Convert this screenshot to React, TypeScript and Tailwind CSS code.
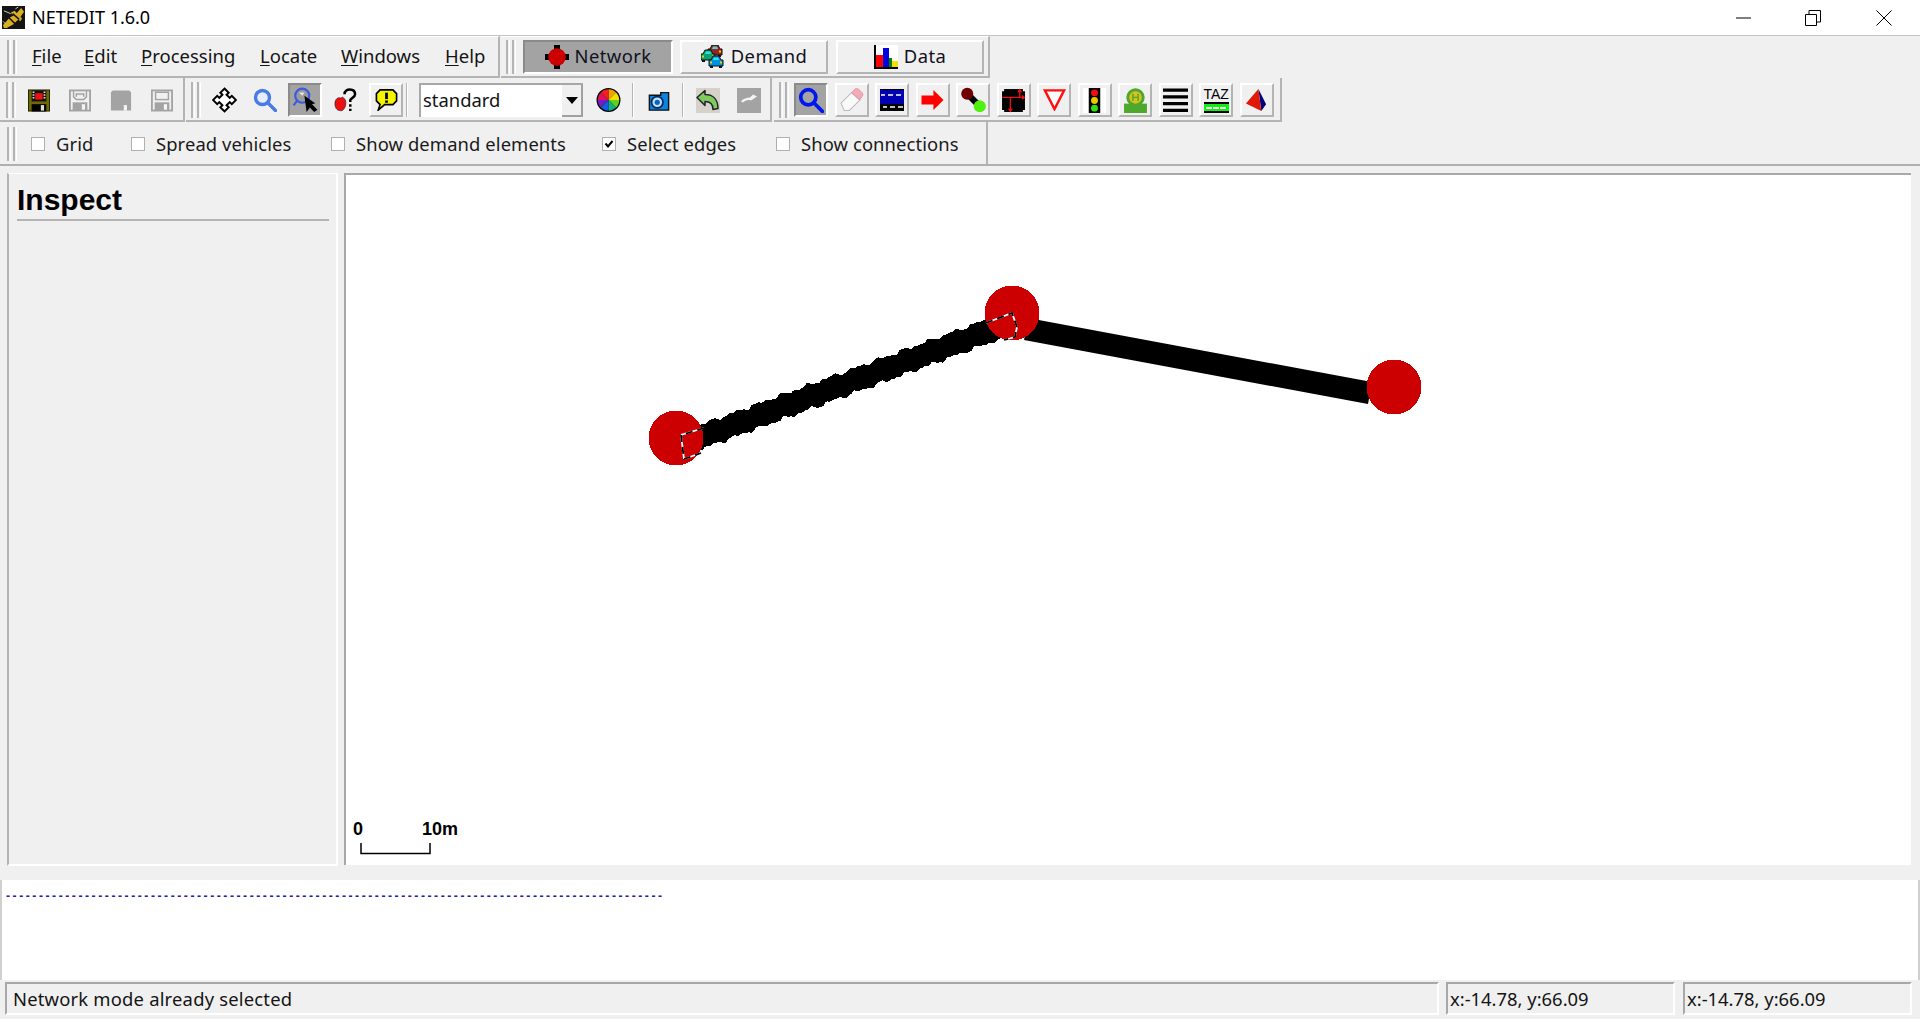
import React from 'react';

const uiFont = 'font-["Noto_Sans",sans-serif]';

// Icons are redrawn by hand from the toolbar bitmaps
const Svg = ({ className, children }: { className: string; children: React.ReactNode }) => (
  <svg viewBox="0 0 24 24" className={`block shrink-0 ${className}`}>{children}</svg>
);

const Logo = () => (
  <svg viewBox="0 0 24 24" className="block shrink-0 w-[23px] h-[23px] ml-[2px] mt-[-1px]">
    <rect width="24" height="24" fill="#141414" />
    <path d="M1 20 L8 12 L14 9 L20 2 L23 6 L18 13 L12 19 L5 23 L2 23 Z" fill="#d8b020" />
    <path d="M9 7 L19 16 L21 13 L13 5 Z" fill="#d8b020" />
    <path d="M6 11 L15 20 M11 8 L18 14" stroke="#141414" strokeWidth="1.6" />
    <path d="M2 5 L9 8 M14 3 L17 1 M1 16 L4 19" stroke="#d0d0d0" strokeWidth="1" />
  </svg>
);

const Disk = ({ variant }: { variant: number }) => {
  if (variant === 0) {
    return (
      <Svg className="w-[22px] h-[23px]">
        <rect x="0.5" y="0.5" width="23" height="23" fill="#6e6a00" stroke="#1a1a00" />
        <rect x="4" y="1" width="16" height="12" fill="#111" />
        <rect x="8" y="4" width="8" height="7" fill="#f01010" />
        <path d="M5 3h2M5 6h2M5 9h2M17 3h2M17 6h2M17 9h2" stroke="#ddd" strokeWidth="1.4" />
        <rect x="4" y="16" width="16" height="8" fill="#000" />
        <rect x="14" y="17" width="3.5" height="6" fill="#ddd" />
      </Svg>
    );
  }
  if (variant === 2) {
    return (
      <Svg className="w-[22px] h-[23px]">
        <path d="M1 3 L3 1 H21 L23 3 V23 H1 Z" fill="#a3a3a3" />
        <rect x="15" y="17" width="3.5" height="6" fill="#f4f4f4" />
      </Svg>
    );
  }
  return (
    <Svg className="w-[22px] h-[23px]">
      <rect x="1" y="1" width="22" height="22" fill="#f0f0f0" stroke="#a3a3a3" strokeWidth="2" />
      {variant === 1 ? (
        <path d="M5 2 V8 L8 11 H16 L19 8 V2 M8 8 V5 H16 V8" fill="none" stroke="#a3a3a3" strokeWidth="1.6" />
      ) : (
        <rect x="5" y="3" width="14" height="8" fill="#f0f0f0" stroke="#a3a3a3" strokeWidth="1.6" />
      )}
      <rect x="4" y="14" width="16" height="9" fill="#a3a3a3" />
      <rect x="14" y="16" width="3.5" height="6" fill="#f4f4f4" />
    </Svg>
  );
};

const MoveIcon = () => (
  <Svg className="w-[25px] h-[26px]">
    <path
      d="M12 1 L16 5 L14 7 L17 10 L19 8 L23 12 L19 16 L17 14 L14 17 L16 19 L12 23 L8 19 L10 17 L7 14 L5 16 L1 12 L5 8 L7 10 L10 7 L8 5 Z"
      fill="#fff"
      stroke="#000"
      strokeWidth="1.9"
    />
  </Svg>
);

const Glass = ({ stroke, fill, width = 3 }: { stroke: string; fill: string; width?: number }) => (
  <>
    <circle cx="9.5" cy="9.5" r="7" fill={fill} stroke={stroke} strokeWidth={width} />
    <path d="M15 15 L22.5 22.5" stroke={stroke} strokeWidth={width} strokeLinecap="round" />
  </>
);

const HelpIcon = () => (
  <Svg className="w-[23px] h-[24px]">
    <path d="M1 16 C1 11 4 9 7 10 L9 9 C12 11 13 13 12 18 C11 22 8 24 6 23 C3 23 1 20 1 16 Z" fill="#ee1010" stroke="#222" strokeWidth="0.7" />
    <path d="M11 6 C11 2 14 1 16.5 1 C20 1 22 3 22 6 C22 9 18 10 17 12 V14" fill="none" stroke="#000" strokeWidth="2.6" />
    <path d="M17 16.5 V19 M17 21 V23.5" stroke="#000" strokeWidth="2.6" />
  </Svg>
);

const BubbleIcon = () => (
  <Svg className="w-[23px] h-[22px]">
    <path d="M5 1 H19 L23 5 V13 L19 17 H10 L3 23 L5 17 L1 13 V5 Z" fill="#f4f400" stroke="#000" strokeWidth="1.8" />
    <path d="M12 4 V11" stroke="#000" strokeWidth="3" />
    <rect x="10.5" y="12.5" width="3" height="2.5" fill="#000" />
  </Svg>
);

const wheelColors = ['#f0a000', '#f4e000', '#60d020', '#10b080', '#1060e0', '#7020c0', '#e01060', '#f02020'];
const ColorWheel = () => (
  <Svg className="w-[25px] h-[26px]">
    <circle cx="12" cy="12" r="11.5" fill="#000" />
    {wheelColors.map((c, i) => {
      const a0 = (i * Math.PI) / 4 - Math.PI / 2;
      const a1 = a0 + Math.PI / 4;
      return (
        <path
          key={c}
          d={`M12 12 L${12 + 10.3 * Math.cos(a0)} ${12 + 10.3 * Math.sin(a0)} A10.3 10.3 0 0 1 ${12 + 10.3 * Math.cos(a1)} ${12 + 10.3 * Math.sin(a1)} Z`}
          fill={c}
        />
      );
    })}
  </Svg>
);

const CameraIcon = () => (
  <Svg className="w-[24px] h-[21px]">
    <path d="M1 6 H14 V3 H23 V23 H1 Z" fill="#0a84e0" stroke="#111" strokeWidth="1.6" />
    <circle cx="10" cy="14" r="6.5" fill="#b8e4ff" stroke="#062a60" strokeWidth="2" />
    <circle cx="10" cy="14" r="3" fill="#1060c0" />
  </Svg>
);

const UndoIcon = () => (
  <div className="w-[24px] h-[25px] bg-[#d6d2ca]">
    <Svg className="w-[24px] h-[25px]">
      <path d="M1 9 L9 2 V6 C16 6 22 10 22 20 L17 21 C17 16 14 13 9 13 V17 Z" fill="#7fcc5a" stroke="#223" strokeWidth="1.5" strokeLinejoin="round" />
    </Svg>
  </div>
);

const RedoIcon = () => (
  <div className="w-[24px] h-[25px] bg-[#a3a3a3]">
    <Svg className="w-[24px] h-[25px]">
      <path d="M4 13 C6 10 10 9 13 9 L16 6 L20 8 L14 12 C11 11 8 12 6 14 Z" fill="#f4f4f4" />
    </Svg>
  </div>
);

const LookupCursor = () => (
  <Svg className="w-[27px] h-[26px]">
    <circle cx="9" cy="8" r="6.5" fill="#9a9a9a" stroke="#3a5ae0" strokeWidth="2" />
    <path d="M9 8 L11 5 L6 5 Z" fill="#e8e8e8" />
    <path d="M4 13 L1 17" stroke="#3a5ae0" strokeWidth="2" />
    <path d="M11 8 L21 15 L18 16 L23 21 L20 23 L16 19 L13 23 Z" fill="#000" />
  </Svg>
);

const EraserIcon = () => (
  <Svg className="w-[25px] h-[26px]">
    <path d="M2 15 L12 5 L20 12 L10 22 L5 22 Z" fill="#fafafa" stroke="#bbb" strokeWidth="1" />
    <path d="M12 5 L16 1 C18 0 23 5 23 7 L20 12 Z" fill="#f4aab8" stroke="#e090a0" strokeWidth="0.8" />
  </Svg>
);

const LaneIcon = () => (
  <Svg className="w-[24px] h-[26px]">
    <rect x="0" y="1" width="24" height="22" fill="#000" />
    <rect x="0" y="2" width="24" height="14" fill="#0000b0" />
    <path d="M1 7 H5 M8 7 H13 M16 7 H21 M3 19 H7 M10 19 H15 M18 19 H23" stroke="#fff" strokeWidth="1.4" />
  </Svg>
);

const RedArrow = () => (
  <Svg className="w-[25px] h-[22px]">
    <path d="M0 7 H13 V1 L24 12 L13 23 V17 H0 Z" fill="#ff0000" />
  </Svg>
);

const ConnectionIcon = () => (
  <Svg className="w-[25px] h-[26px]">
    <path d="M7 7 L17 17" stroke="#000" strokeWidth="6" />
    <circle cx="6" cy="6" r="5.8" fill="#700000" />
    <circle cx="18" cy="18" r="5.8" fill="#50f010" />
  </Svg>
);

const CrossingIcon = () => (
  <Svg className="w-[25px] h-[25px]">
    <rect x="1" y="1" width="22" height="22" fill="#000" />
    <path d="M0 0h3v3h-3zM21 0h3v3h-3zM0 21h3v3h-3zM21 21h3v3h-3z" fill="#f0f0f0" />
    <path d="M1 9 H21 M9 9 V21 M18 3 V9" stroke="#ee1010" strokeWidth="1.3" />
    <path d="M18 0.5 L15.5 4 H20.5 Z M23.5 9 L20 6.5 V11.5 Z M9 23.5 L6.5 20 H11.5 Z" fill="#ee1010" />
  </Svg>
);

const YieldIcon = () => (
  <Svg className="w-[25px] h-[22px]">
    <path d="M1.5 1.5 H22.5 L12 22 Z" fill="#fff" stroke="#ff1010" strokeWidth="2.6" />
  </Svg>
);

const TrafficIcon = () => (
  <svg viewBox="0 0 24 26" className="block shrink-0 w-[23px] h-[25px] bg-white">
    <rect x="6" y="0" width="12" height="26" fill="#000" />
    <circle cx="12" cy="5" r="3.6" fill="#f01010" />
    <circle cx="12" cy="13" r="3.6" fill="#e8c800" />
    <circle cx="12" cy="21" r="3.6" fill="#30e010" />
  </svg>
);

const BusStopIcon = () => (
  <Svg className="w-[25px] h-[25px]">
    <rect x="1" y="15" width="22" height="9" fill="#4ea82c" />
    <circle cx="12" cy="9" r="8.8" fill="#4ea82c" />
    <circle cx="12" cy="9" r="6" fill="#d8c020" />
    <path d="M9.5 5.5 V12.5 M14.5 5.5 V12.5 M9.5 9 H14.5" stroke="#4ea82c" strokeWidth="1.4" />
  </Svg>
);

const StripesIcon = () => (
  <Svg className="w-[25px] h-[25px]">
    <path d="M0 2 H24 M0 8.5 H24 M0 15 H24 M0 21.5 H24" stroke="#000" strokeWidth="3" />
  </Svg>
);

const TazIcon = () => (
  <div className="flex flex-col items-center w-[25px] h-[26px]">
    <span className='block h-[14px] font-["Liberation_Sans",sans-serif] text-[15.5px] leading-[14px] text-black scale-x-90'>TAZ</span>
    <div className="w-[25px] h-[12px] mt-[1px] bg-[#10f010] border-y-2 border-black flex items-center justify-center">
      <div className="w-[20px] border-t-2 border-dashed border-white" />
    </div>
  </div>
);

const PolygonIcon = () => (
  <Svg className="w-[23px] h-[25px]">
    <path d="M14 0 L22 16 L17 23 Z" fill="#000080" />
    <path d="M14 0 L1 15 L17 23 Z" fill="#e01808" />
  </Svg>
);

const NetworkIcon = () => (
  <Svg className="w-[24px] h-[24px]">
    <path d="M9 0h6v5h-6zM0 9h5v6h-5zM19 9h5v6h-5zM9 19h6v5h-6z" fill="#000" />
    <circle cx="12" cy="12" r="8.8" fill="#cc0000" />
  </Svg>
);

const Car = ({ x, y, fill }: { x: number; y: number; fill: string }) => (
  <g transform={`translate(${x} ${y})`}>
    <path d="M2 4 L4 0 H10 L12 4 H14 V10 H0 V4 Z" fill={fill} stroke="#111" strokeWidth="1" />
    <path d="M4 4 L5 1.5 H9 L10 4 Z" fill="#30e0e0" />
    <rect x="1" y="5.5" width="2" height="2" fill="#f0d000" />
    <rect x="11" y="5.5" width="2" height="2" fill="#f0d000" />
    <rect x="1" y="10" width="3" height="2" fill="#111" />
    <rect x="10" y="10" width="3" height="2" fill="#111" />
  </g>
);

const DemandIcon = () => (
  <Svg className="w-[24px] h-[24px]">
    <Car x={7} y={0} fill="#a02020" />
    <Car x={0} y={5} fill="#10a070" />
    <Car x={8} y={11} fill="#0090e0" />
  </Svg>
);

const DataIcon = () => (
  <Svg className="w-[24px] h-[24px]">
    <rect width="24" height="24" fill="#fff" />
    <rect x="2" y="10" width="7" height="12" fill="#ff0000" />
    <rect x="9" y="3" width="6" height="19" fill="#0000e0" />
    <rect x="15" y="13" width="3" height="9" fill="#008000" />
    <rect x="18" y="16" width="6" height="6" fill="#f4e000" />
    <path d="M1 0 V23 H24" fill="none" stroke="#000" strokeWidth="2" />
  </Svg>
);

// double line handle at the start of every toolbar
const Grip = ({ className }: { className: string }) => (
  <div className={`flex gap-[2px] shrink-0 ${className}`}>
    <div className="w-[4px] h-full border-l-2 border-r border-l-[#b4b4b4] border-r-white" />
    <div className="w-[4px] h-full border-l-2 border-r border-l-[#b4b4b4] border-r-white" />
  </div>
);

const Divider = ({ className = '' }: { className?: string }) => (
  <div className={`w-[2px] h-[34px] shrink-0 border-l border-r border-l-[#b4b4b4] border-r-white ${className}`} />
);

const IconButton = ({ pressed, raised, children }: { pressed?: boolean; raised?: boolean; children: React.ReactNode }) => {
  let style = 'border-transparent';
  if (pressed) style = 'bg-[#a3a3a3] border-t-[#8a8a8a] border-l-[#8a8a8a] border-r-white border-b-white';
  if (raised) style = 'border-t-white border-l-white border-r-[#b4b4b4] border-b-[#b4b4b4]';
  return (
    <div className={`w-[34px] h-[34px] shrink-0 flex items-center justify-center border-2 ${style}`}>{children}</div>
  );
};

const ModeButton = ({ label, pressed, className, icon }: { label: string; pressed?: boolean; className: string; icon: React.ReactNode }) => (
  <div
    className={`flex items-center justify-center gap-[6px] h-[34px] border-2 text-[18.4px] tracking-[0.4px] text-[#111122] ${className} ${
      pressed
        ? 'bg-[#a3a3a3] border-t-[#8a8a8a] border-l-[#8a8a8a] border-r-white border-b-white'
        : 'border-t-white border-l-white border-r-[#b4b4b4] border-b-[#b4b4b4]'
    }`}
  >
    {icon}
    <span className="mt-[-2px]">{label}</span>
  </div>
);

const menus = [
  { label: 'File', key: 'F', rest: 'ile', width: 'w-[52px]' },
  { label: 'Edit', key: 'E', rest: 'dit', width: 'w-[57px]' },
  { label: 'Processing', key: 'P', rest: 'rocessing', width: 'w-[119px]' },
  { label: 'Locate', key: 'L', rest: 'ocate', width: 'w-[81px]' },
  { label: 'Windows', key: 'W', rest: 'indows', width: 'w-[104px]' },
  { label: 'Help', key: 'H', rest: 'elp', width: 'w-[50px]' },
];

const checks = [
  { label: 'Grid', width: 'w-[100px]', checked: false },
  { label: 'Spread vehicles', width: 'w-[200px]', checked: false },
  { label: 'Show demand elements', width: 'w-[271px]', checked: false },
  { label: 'Select edges', width: 'w-[174px]', checked: true },
  { label: 'Show connections', width: 'w-[190px]', checked: false },
];

const Check = ({ label, checked, width }: { label: string; checked: boolean; width: string }) => (
  <div className={`flex items-center shrink-0 text-[18.4px] tracking-[0.1px] text-[#1a1a1a] ${width}`}>
    <div className="w-[14px] h-[14px] mr-[11px] bg-white border border-[#b0b0b0] flex items-center justify-center">
      {checked && (
        <svg viewBox="0 0 10 10" className="block w-[10px] h-[10px]">
          <path d="M1.5 4.5 L4 7.5 L8.5 2" fill="none" stroke="#000" strokeWidth="2" />
        </svg>
      )}
    </div>
    <span>{label}</span>
  </div>
);

// the road in the picture has stepped edges, so it is built from small jogs
const jaggedRoad = (x0: number, y0: number, x1: number, y1: number, half: number): string => {
  const len = Math.hypot(x1 - x0, y1 - y0);
  const ux = (x1 - x0) / len;
  const uy = (y1 - y0) / len;
  const side = (sign: number, phase: number): string[] => {
    const pts: string[] = [];
    for (let d = 0; d <= len; d += 2) {
      const wob = 1.2 * Math.sin(d / 4.1 + phase) + 0.9 * Math.sin(d / 2.3 + phase) + 0.6 * Math.sin(d / 1.2);
      const h = half + wob;
      pts.push(`${(x0 + ux * d - sign * uy * h).toFixed(1)},${(y0 + uy * d + sign * ux * h).toFixed(1)}`);
    }
    return pts;
  };
  return [...side(1, 0), ...side(-1, 1.5).reverse()].join(' ');
};

const NetCanvas = () => (
  <svg viewBox="346 175 1565 690" className="block w-[1565px] h-[690px]">
    <polygon points={jaggedRoad(690, 441, 1005, 325, 11.5)} fill="#000" shapeRendering="crispEdges" />
    <polygon points="1028,318 1372,382 1368,404 1024,340" fill="#000" />
    <circle cx="676" cy="438" r="27.5" fill="#cc0000" shapeRendering="crispEdges" />
    <circle cx="1012" cy="313" r="27.5" fill="#cc0000" shapeRendering="crispEdges" />
    <circle cx="1394" cy="387" r="27.5" fill="#cc0000" shapeRendering="crispEdges" />
    <polyline points="704,428 681,435 684,459 701,453" fill="none" stroke="#fff" strokeWidth="1.8" />
    <polyline points="704,428 681,435 684,459 701,453" fill="none" stroke="#000" strokeWidth="1.8" strokeDasharray="7 5" />
    <polyline points="986,323 1012,313 1017,327 1015,337 1004,340" fill="none" stroke="#fff" strokeWidth="1.8" />
    <polyline points="986,323 1012,313 1017,327 1015,337 1004,340" fill="none" stroke="#000" strokeWidth="1.8" strokeDasharray="7 5" />
    <text x="353" y="835" fontFamily="Liberation Sans, sans-serif" fontWeight="700" fontSize="18" fill="#000">0</text>
    <text x="422" y="835" fontFamily="Liberation Sans, sans-serif" fontWeight="700" fontSize="18" fill="#000">10m</text>
    <path d="M361 843 V853.5 H430 V843" fill="none" stroke="#000" strokeWidth="1.5" />
  </svg>
);

const StatusBox = ({ text, className }: { text: string; className: string }) => (
  <div className={`h-[33px] flex items-center text-[18.4px] text-[#141414] border-t-2 border-l-2 border-r-2 border-b-2 border-t-[#a8a8a8] border-l-[#a8a8a8] border-r-white border-b-white ${className}`}>
    {text}
  </div>
);

export default function App(): React.ReactElement {
  return (
    <div className={`w-[1920px] h-[1019px] overflow-hidden bg-[#f0f0f0] flex flex-col ${uiFont}`}>
      {/* title bar */}
      <div className="h-[36px] shrink-0 bg-white border-b border-[#c4c4c4] flex items-center">
        <Logo />
        <span className="ml-[7px] text-[18px] text-black">NETEDIT 1.6.0</span>
        <div className="ml-auto flex items-center mr-[28px]">
          <svg viewBox="0 0 16 16" className="block w-[16px] h-[16px]">
            <path d="M0 8 H15" stroke="#000" strokeWidth="1" />
          </svg>
          <svg viewBox="0 0 16 16" className="block w-[16px] h-[16px] ml-[53px]">
            <path d="M0.5 4.5 H11.5 V15.5 H0.5 Z M4 4 V0.5 H15.5 V12 H12" fill="none" stroke="#000" strokeWidth="1" />
          </svg>
          <svg viewBox="0 0 16 16" className="block w-[16px] h-[16px] ml-[55px]">
            <path d="M0.5 0.5 L15.5 15.5 M15.5 0.5 L0.5 15.5" stroke="#000" strokeWidth="1" />
          </svg>
        </div>
      </div>

      {/* menu and supermode row */}
      <div className="h-[42px] shrink-0 flex">
        <div className="w-[500px] flex items-center border-t border-r-2 border-b-2 border-t-white border-r-[#b4b4b4] border-b-[#b4b4b4]">
          <Grip className="h-[34px] ml-[7px] mr-[15px]" />
          <div className="flex items-center mt-[-2px] text-[18.5px] text-[#141414]">
            {menus.map((m) => (
              <div key={m.label} className={m.width}>
                <span className="underline underline-offset-2">{m.key}</span>
                {m.rest}
              </div>
            ))}
          </div>
        </div>
        <div className="w-[489px] ml-[1px] flex items-center border-t border-r-2 border-b-2 border-t-white border-r-[#b4b4b4] border-b-[#b4b4b4]">
          <Grip className="h-[34px] ml-[5px] mr-[7px]" />
          <ModeButton label="Network" pressed className="w-[150px]" icon={<NetworkIcon />} />
          <ModeButton label="Demand" className="w-[148px] ml-[7px]" icon={<DemandIcon />} />
          <ModeButton label="Data" className="w-[148px] ml-[8px]" icon={<DataIcon />} />
        </div>
      </div>

      {/* tool row */}
      <div className="h-[44px] shrink-0 flex">
        <div className="w-[185px] flex items-center pt-[2px] border-r-2 border-b-2 border-r-[#b4b4b4] border-b-[#b4b4b4]">
          <Grip className="h-[36px] ml-[6px] mr-[12px]" />
          <div className="flex items-center gap-[19px]">
            <Disk variant={0} />
            <Disk variant={1} />
            <Disk variant={2} />
            <Disk variant={3} />
          </div>
        </div>
        <div className="w-[586px] ml-[1px] flex items-center pt-[2px] border-r-2 border-b-2 border-r-[#b4b4b4] border-b-[#b4b4b4]">
          <Grip className="h-[36px] ml-[5px] mr-[6px]" />
          <div className="flex items-center gap-[6.5px]">
            <IconButton><MoveIcon /></IconButton>
            <IconButton>
              <Svg className="w-[24px] h-[24px]"><Glass stroke="#4a7ae8" fill="#e4eefa" width={3.4} /></Svg>
            </IconButton>
            <IconButton pressed><LookupCursor /></IconButton>
            <IconButton><HelpIcon /></IconButton>
            <IconButton raised><BubbleIcon /></IconButton>
          </div>
          <Divider className="ml-[3px]" />
          <div className="ml-[11px] w-[164px] h-[34px] bg-white flex items-center border-t-2 border-l-2 border-t-[#a8a8a8] border-l-[#a8a8a8]">
            <span className="flex-1 pl-[2px] mt-[-2px] text-[18.4px] text-[#141414]">standard</span>
            <div className="w-[21px] h-[32px] bg-[#f0f0f0] border-r-2 border-b-2 border-r-[#a0a0a0] border-b-[#a0a0a0] flex items-center justify-center">
              <svg viewBox="0 0 12 7" className="block w-[12px] h-[7px]">
                <path d="M0 0 H12 L6 7 Z" fill="#000" />
              </svg>
            </div>
          </div>
          <div className="ml-[13px]"><ColorWheel /></div>
          <Divider className="ml-[11px]" />
          <div className="ml-[13px]"><CameraIcon /></div>
          <Divider className="ml-[11px]" />
          <div className="ml-[12px]"><UndoIcon /></div>
          <div className="ml-[17px]"><RedoIcon /></div>
        </div>
        <div className="w-[508px] ml-[2px] flex items-center pt-[2px] border-r-2 border-b-2 border-r-[#b4b4b4] border-b-[#b4b4b4]">
          <Grip className="h-[36px] ml-[5px] mr-[5px]" />
          <div className="flex items-center gap-[6.5px]">
            <IconButton pressed>
              <Svg className="w-[26px] h-[26px]"><Glass stroke="#0018f0" fill="none" width={3.4} /></Svg>
            </IconButton>
            <IconButton raised><EraserIcon /></IconButton>
            <IconButton raised><LaneIcon /></IconButton>
            <IconButton raised><RedArrow /></IconButton>
            <IconButton raised><ConnectionIcon /></IconButton>
            <IconButton raised><CrossingIcon /></IconButton>
            <IconButton raised><YieldIcon /></IconButton>
            <IconButton raised><TrafficIcon /></IconButton>
            <IconButton raised><BusStopIcon /></IconButton>
            <IconButton raised><StripesIcon /></IconButton>
            <IconButton raised><TazIcon /></IconButton>
            <IconButton raised><PolygonIcon /></IconButton>
          </div>
        </div>
      </div>

      {/* options row */}
      <div className="h-[44px] shrink-0 flex border-b-2 border-[#b0b0b0]">
        <div className="w-[988px] flex items-center pt-[2px] border-r-2 border-[#b4b4b4]">
          <Grip className="h-[34px] ml-[7px] mr-[14px]" />
          {checks.map((c) => (
            <Check key={c.label} label={c.label} checked={c.checked} width={c.width} />
          ))}
        </div>
      </div>

      {/* frames */}
      <div className="h-[714px] shrink-0 flex pt-[7px] pl-[7px]">
        <div className="w-[331px] h-[693px] shrink-0 border-l-2 border-t border-r-2 border-b-2 border-l-[#b4b4b4] border-t-white border-r-white border-b-white pl-[8px] pr-[7px]">
          <div className='h-[47px] pt-[5px] border-b-2 border-[#b4b4b4] font-["Liberation_Sans",sans-serif] font-bold text-[30px] leading-[42px] text-black'>
            Inspect
          </div>
        </div>
        <div className="w-[1567px] h-[692px] ml-[6px] shrink-0 bg-white border-l-2 border-t-2 border-[#a8a8a8]">
          <NetCanvas />
        </div>
      </div>

      {/* log */}
      <div className="h-[100px] shrink-0 bg-white border-l-2 border-r-2 border-[#d0d0d0] pl-[4px] pt-[6px]">
        <div className="font-['Liberation_Sans',sans-serif] font-bold text-[12px] leading-[20px] tracking-[2.59px] text-[#2020b0] whitespace-nowrap">
          {'-'.repeat(100)}
        </div>
      </div>

      {/* status bar */}
      <div className="flex-1 flex pt-[2px] pl-[5px]">
        <StatusBox text="Network mode already selected" className="w-[1434px] pl-[6px] tracking-[0.2px]" />
        <StatusBox text="x:-14.78, y:66.09" className="w-[229px] ml-[7px] pl-[2px]" />
        <StatusBox text="x:-14.78, y:66.09" className="w-[229px] ml-[8px] pl-[2px]" />
      </div>
    </div>
  );
}
